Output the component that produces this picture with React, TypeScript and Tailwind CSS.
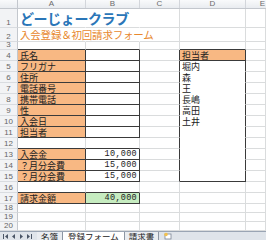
import React from 'react';

type Edge = 'g' | 'd' | 'n';

const RIGHT: Record<Edge, string> = {
  g: 'border-r-[#dadcdd]',
  d: 'border-r-[#3a3a3a]',
  n: 'border-r-transparent',
};

const BOTTOM: Record<Edge, string> = {
  g: 'border-b-[#dadcdd]',
  d: 'border-b-[#3a3a3a]',
  n: 'border-b-white',
};

interface CellProps {
  w: string;
  r?: Edge;
  b?: Edge;
  bg?: string;
  right?: boolean;
  children?: React.ReactNode;
}

function Cell({ w, r = 'g', b = 'g', bg = 'bg-white', right, children }: CellProps) {
  return (
    <div
      className={`${w} ${bg} ${RIGHT[r]} ${BOTTOM[b]} relative flex shrink-0 items-end border-r border-b ${
        right ? 'justify-end pr-[2px]' : 'pl-[2px]'
      } overflow-visible whitespace-nowrap`}
    >
      {children}
    </div>
  );
}

function RowHead({ n }: { n: number }) {
  return (
    <div className="flex w-[18px] shrink-0 items-end justify-center border-r border-b border-r-[#c3c7cd] border-b-[#d9dce0] bg-[#f2f3f5] font-['Liberation_Sans',sans-serif] text-[8px] leading-[9px] text-[#666]">
      {n}
    </div>
  );
}

const ORANGE = 'bg-[#f8b883]';
const GREEN = 'bg-[#c6ecc0]';

type RowDef = {
  n: number;
  h: string;
  a?: { t?: string; r?: Edge; b?: Edge; bg?: string };
  bb?: { t?: string; r?: Edge; b?: Edge; bg?: string };
  c?: { r?: Edge; b?: Edge };
  d?: { t?: string; r?: Edge; b?: Edge; bg?: string };
};

const labelRows: RowDef[] = [
  { n: 4, h: 'h-[11px]', a: { t: '氏名', r: 'd', b: 'd', bg: ORANGE }, bb: { r: 'd', b: 'd' }, c: { r: 'd' }, d: { t: '担当者', r: 'd', b: 'd', bg: ORANGE } },
  { n: 5, h: 'h-[11px]', a: { t: 'フリガナ', r: 'd', b: 'd', bg: ORANGE }, bb: { r: 'd', b: 'd' }, c: { r: 'd' }, d: { t: '堀内', r: 'd', b: 'n' } },
  { n: 6, h: 'h-[11px]', a: { t: '住所', r: 'd', b: 'd', bg: ORANGE }, bb: { r: 'd', b: 'd' }, c: { r: 'd' }, d: { t: '森', r: 'd', b: 'n' } },
  { n: 7, h: 'h-[11px]', a: { t: '電話番号', r: 'd', b: 'd', bg: ORANGE }, bb: { r: 'd', b: 'd' }, c: { r: 'd' }, d: { t: '王', r: 'd', b: 'n' } },
  { n: 8, h: 'h-[11px]', a: { t: '携帯電話', r: 'd', b: 'd', bg: ORANGE }, bb: { r: 'd', b: 'd' }, c: { r: 'd' }, d: { t: '長嶋', r: 'd', b: 'n' } },
  { n: 9, h: 'h-[11px]', a: { t: '性', r: 'd', b: 'd', bg: ORANGE }, bb: { r: 'd', b: 'd' }, c: { r: 'd' }, d: { t: '高田', r: 'd', b: 'n' } },
  { n: 10, h: 'h-[11px]', a: { t: '入会日', r: 'd', b: 'd', bg: ORANGE }, bb: { r: 'd', b: 'd' }, c: { r: 'd' }, d: { t: '土井', r: 'd', b: 'n' } },
  { n: 11, h: 'h-[11px]', a: { t: '担当者', r: 'd', b: 'd', bg: ORANGE }, bb: { r: 'd', b: 'd' }, c: { r: 'd' }, d: { r: 'd', b: 'n' } },
  { n: 12, h: 'h-[11px]', a: { b: 'd' }, bb: { b: 'd' }, c: { r: 'd' }, d: { r: 'd', b: 'n' } },
  { n: 13, h: 'h-[11px]', a: { t: '入会金', r: 'd', b: 'd', bg: ORANGE }, bb: { t: '10,000', r: 'd', b: 'd' }, c: { r: 'd' }, d: { r: 'd', b: 'n' } },
  { n: 14, h: 'h-[11px]', a: { t: '？月分会費', r: 'd', b: 'd', bg: ORANGE }, bb: { t: '15,000', r: 'd', b: 'd' }, c: { r: 'd' }, d: { r: 'd', b: 'n' } },
  { n: 15, h: 'h-[11px]', a: { t: '？月分会費', r: 'd', b: 'd', bg: ORANGE }, bb: { t: '15,000', r: 'd', b: 'd' }, c: { r: 'd' }, d: { r: 'd', b: 'd' } },
  { n: 16, h: 'h-[11px]', a: { b: 'd' }, bb: { b: 'd' } },
  { n: 17, h: 'h-[11px]', a: { t: '請求金額', r: 'd', b: 'd', bg: ORANGE }, bb: { t: '40,000', r: 'd', b: 'd', bg: GREEN } },
  { n: 18, h: 'h-[9px]' },
  { n: 19, h: 'h-[9px]' },
  { n: 20, h: 'h-[9px]' },
];

function SheetRow({ row }: { row: RowDef }) {
  const a = row.a ?? {};
  const b = row.bb ?? {};
  const c = row.c ?? {};
  const d = row.d ?? {};
  return (
    <div className={`flex ${row.h} shrink-0 text-[9px] leading-[9px] text-[#222]`}>
      <RowHead n={row.n} />
      <Cell w="w-[68px]" r={a.r} b={a.b} bg={a.bg}>{a.t}</Cell>
      <Cell w="w-[54px]" r={b.r} b={b.b} bg={b.bg} right>
        {b.t && <span className="font-['Liberation_Mono',monospace] text-[8.5px] tracking-[0.3px]">{b.t}</span>}
      </Cell>
      <Cell w="w-[40px]" r={c.r} b={c.b} />
      <Cell w="w-[66px]" r={d.r} b={d.b} bg={d.bg}>{d.t}</Cell>
      <Cell w="flex-1" />
    </div>
  );
}

function NavArrows() {
  return (
    <svg width="37" height="9" viewBox="0 0 37 9" className="shrink-0">
      <g fill="#4a5566">
        <rect x="3" y="2" width="1" height="5" />
        <path d="M8 2 L5 4.5 L8 7 Z" />
        <path d="M15 2 L12 4.5 L15 7 Z" />
        <path d="M20 2 L23 4.5 L20 7 Z" />
        <path d="M27 2 L30 4.5 L27 7 Z" />
        <rect x="31" y="2" width="1" height="5" />
      </g>
    </svg>
  );
}

export default function App() {
  return (
    <div className="flex h-[240px] w-[266px] flex-col overflow-hidden bg-white font-['Noto_Sans_CJK_JP','Noto_Sans',sans-serif]">
      {/* column headers */}
      <div className="flex h-[9px] shrink-0 border-b border-[#c3c7cd] bg-gradient-to-b from-[#f9fafb] to-[#e9ecf0] font-['Liberation_Sans',sans-serif] text-[8px] leading-[8px] text-[#6b6b6b]">
        <div className="w-[18px] shrink-0 border-r border-[#c3c7cd]" />
        <div className="flex w-[68px] shrink-0 justify-center border-r border-[#d3d6db]">A</div>
        <div className="flex w-[54px] shrink-0 justify-center border-r border-[#d3d6db]">B</div>
        <div className="flex w-[40px] shrink-0 justify-center border-r border-[#d3d6db]">C</div>
        <div className="flex w-[66px] shrink-0 justify-center border-r border-[#d3d6db]">D</div>
        <div className="flex flex-1 justify-end pr-[1px]">E</div>
      </div>

      {/* title rows */}
      <div className="flex h-[19px] shrink-0">
        <RowHead n={1} />
        <Cell w="w-[68px]" r="n">
          <span className="relative z-10 pb-[1px] text-[14px] leading-[16px] font-bold tracking-[-0.4px] text-[#2a76b8]">どーじょークラブ</span>
        </Cell>
        <Cell w="w-[54px]" r="n" bg="bg-transparent" />
        <Cell w="w-[40px]" bg="bg-transparent" />
        <Cell w="w-[66px]" />
        <Cell w="flex-1" />
      </div>
      <div className="flex h-[14px] shrink-0">
        <RowHead n={2} />
        <Cell w="w-[68px]" r="n">
          <span className="relative z-10 text-[10.5px] leading-[13px] tracking-[-0.2px] text-[#e8882e]">入会登録＆初回請求フォーム</span>
        </Cell>
        <Cell w="w-[54px]" r="n" bg="bg-transparent" />
        <Cell w="w-[40px]" bg="bg-transparent" />
        <Cell w="w-[66px]" />
        <Cell w="flex-1" />
      </div>
      <div className="flex h-[8px] shrink-0">
        <RowHead n={3} />
        <Cell w="w-[68px]" b="d" />
        <Cell w="w-[54px]" b="d" />
        <Cell w="w-[40px]" />
        <Cell w="w-[66px]" b="d" />
        <Cell w="flex-1" />
      </div>

      {labelRows.map((row) => (
        <SheetRow key={row.n} row={row} />
      ))}

      {/* sheet tabs */}
      <div className="flex min-h-0 flex-1 items-stretch border-t border-[#9aa5b4] bg-[#dfe4ea] text-[8.5px] leading-[9px] text-[#222]">
        <NavArrows />
        <div className="flex items-center border-r border-[#8c96a3] bg-[#e9ecf0] px-[4px]">名簿</div>
        <div className="flex items-center border-r border-[#8c96a3] bg-white px-[5px]">登録フォーム</div>
        <div className="flex items-center border-r border-[#8c96a3] bg-[#e9ecf0] px-[4px]">請求書</div>
        <div className="flex items-center px-[4px]">
          <svg width="10" height="8" viewBox="0 0 10 8">
            <rect x="2" y="2" width="6" height="5" fill="#fff" stroke="#7a8696" strokeWidth="0.8" />
            <circle cx="3" cy="2.5" r="1.8" fill="#f2c14e" />
          </svg>
        </div>
      </div>
    </div>
  );
}
